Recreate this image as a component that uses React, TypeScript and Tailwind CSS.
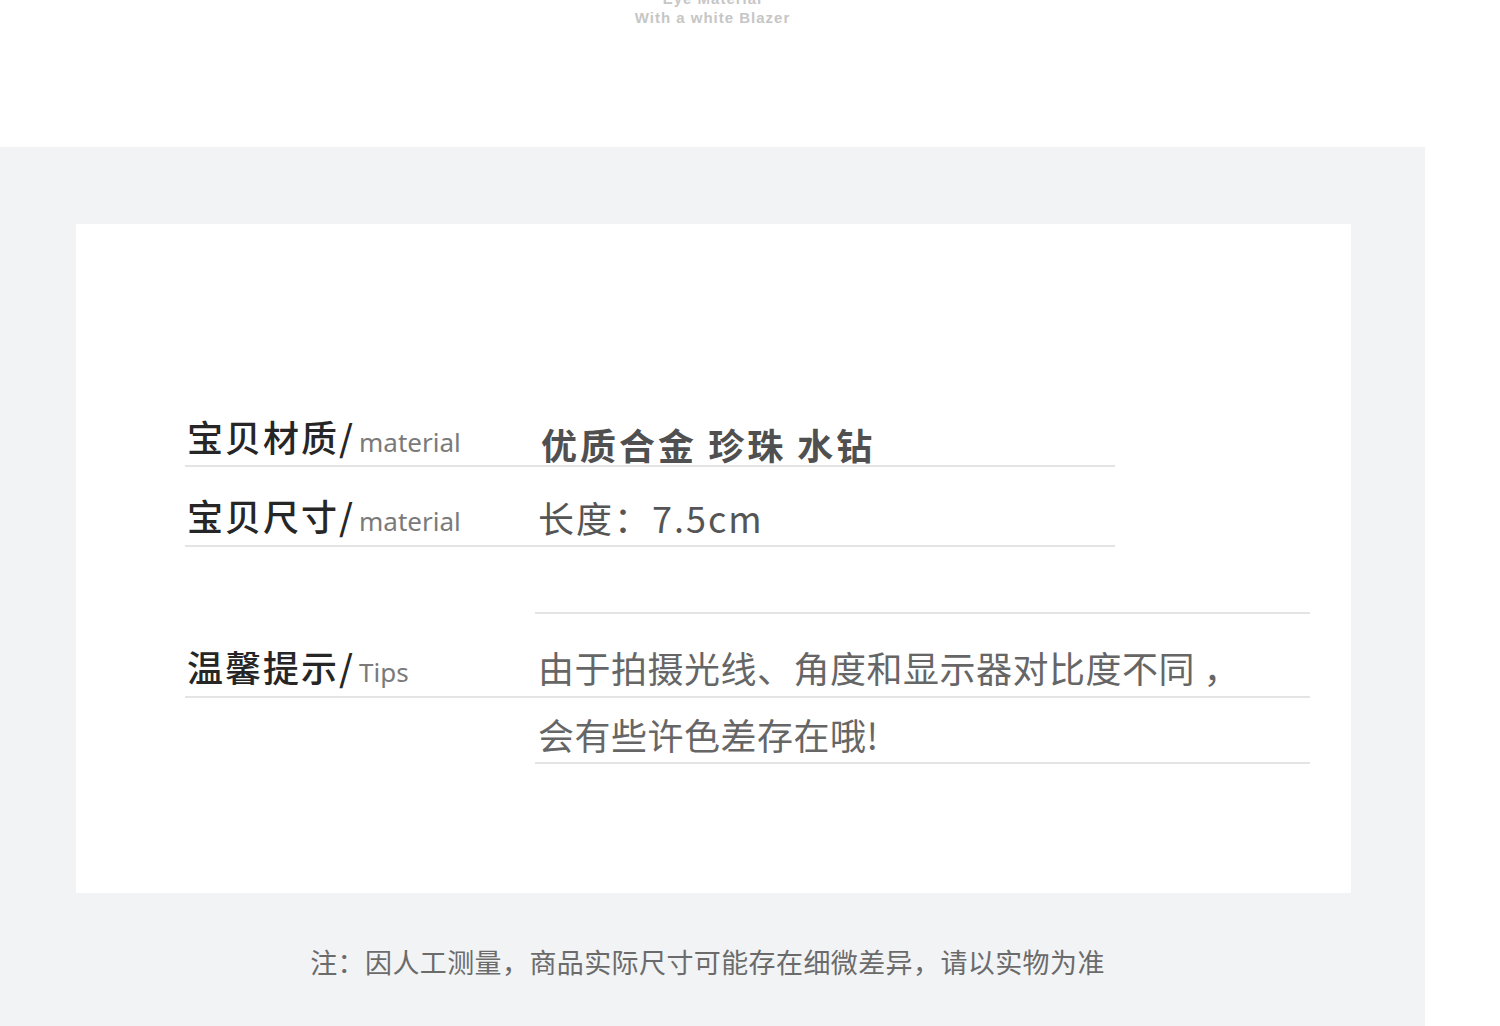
export default function App() {
  const cjk = "font-['Noto_Sans_CJK_SC','Noto_Sans',sans-serif]";
  const latin = "font-['Noto_Sans','Noto_Sans_CJK_SC',sans-serif]";

  return (
    <div className="min-h-[1026px] w-[1500px] overflow-hidden bg-white">
      {/* top strip from the previous section */}
      <div className="flex h-[147px] w-[1425px] flex-col items-center overflow-hidden">
        <div className="-mt-[11px] flex flex-col items-center font-['Liberation_Sans',Arial,sans-serif] text-[15px] font-bold leading-[19px] tracking-[1px] text-[#c6c6c6]">
          <span>Eye Material</span>
          <span>With a white Blazer</span>
        </div>
      </div>

      <div className="h-[879px] w-[1425px] bg-[#f2f3f5] pt-[77px]">
        <div className="ml-[76px] h-[669px] w-[1275px] bg-white pl-[109px] pt-[163px]">
          <div className={cjk}>
            <div className="flex h-[80px] w-[930px] items-end border-b-2 border-[#e4e4e4]">
              <div className="flex w-[350px] items-baseline pb-[10px] pl-[2px]">
                <span className="text-[36px] font-medium leading-none tracking-[2px] text-[#262626]">宝贝材质/</span>
                <span className={`${latin} ml-[4px] text-[26px] leading-none text-[#7a7a7a]`}>material</span>
              </div>
              <div className="pb-[3px] pl-[6px] text-[36px] font-semibold leading-none tracking-[3px] text-[#505050]">
                优质合金 珍珠 水钻
              </div>
            </div>

            <div className="flex h-[80px] w-[930px] items-end border-b-2 border-[#e4e4e4]">
              <div className="flex w-[350px] items-baseline pb-[11px] pl-[2px]">
                <span className="text-[36px] font-medium leading-none tracking-[2px] text-[#262626]">宝贝尺寸/</span>
                <span className={`${latin} ml-[4px] text-[26px] leading-none text-[#7a7a7a]`}>material</span>
              </div>
              <div className="pb-[10px] pl-[3px] text-[36px] leading-none tracking-[2px] text-[#555]">长度：7.5cm</div>
            </div>

            <div className="h-[65px]" />

            <div className="w-[1125px]">
              <div className="ml-[350px] border-t-2 border-[#e4e4e4]" />
              <div className="flex h-[84px] items-end border-b-2 border-[#e4e4e4]">
                <div className="flex w-[350px] items-baseline pb-[11px] pl-[2px]">
                  <span className="text-[36px] font-medium leading-none tracking-[2px] text-[#262626]">温馨提示/</span>
                  <span className={`${latin} ml-[4px] text-[26px] leading-none text-[#7a7a7a]`}>Tips</span>
                </div>
                <div className="pb-[11px] pl-[3px] text-[36px] leading-none tracking-[0.5px] text-[#666]">
                  由于拍摄光线、角度和显示器对比度不同 ，
                </div>
              </div>
              <div className="ml-[350px] flex h-[66px] items-end border-b-2 border-[#e4e4e4]">
                <div className="pb-[10px] pl-[3px] text-[36px] leading-none tracking-[0.5px] text-[#666]">会有些许色差存在哦!</div>
              </div>
            </div>
          </div>
        </div>

        <div className={`${cjk} ml-[76px] mt-[53px] w-[1275px] pr-[12px] text-center text-[27px] leading-[32px] tracking-[0.4px] text-[#6b6b6b]`}>
          注：因人工测量，商品实际尺寸可能存在细微差异，请以实物为准
        </div>
      </div>
    </div>
  );
}
